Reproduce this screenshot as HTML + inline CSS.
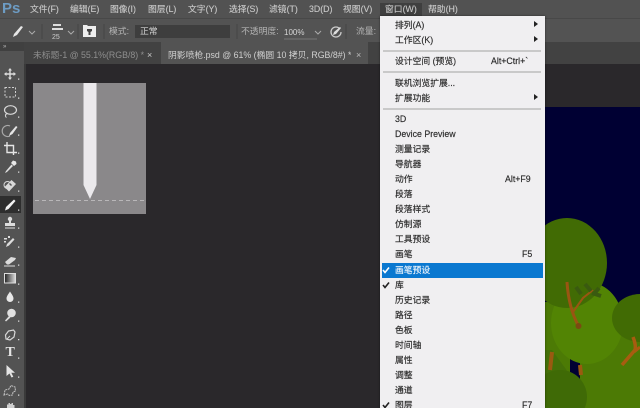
<!DOCTYPE html>
<html><head><meta charset="utf-8"><style>
html,body{margin:0;padding:0}
body{width:640px;height:408px;overflow:hidden;position:relative;background:#2a282b;font-family:"Liberation Sans","Noto Sans CJK SC",sans-serif}
#w{position:absolute;left:0;top:0;width:640px;height:408px;overflow:hidden;filter:blur(.35px)}
.a{position:absolute;white-space:nowrap}
.m{top:3px;font-size:8.8px;line-height:13px;color:#c8c8c8;-webkit-text-stroke:.12px #c8c8c8}
.i{position:absolute;left:395px;font-size:8.8px;line-height:15px;height:15px;color:#2a2a2a;white-space:nowrap;-webkit-text-stroke:.15px currentColor}
.k{position:absolute;font-size:8.8px;line-height:15px;color:#2a2a2a;white-space:nowrap;-webkit-text-stroke:.15px currentColor}
.s{position:absolute;left:383px;width:158px;height:1.500px;background:#c9c9c9}
.r{position:absolute;left:534px;width:0;height:0;border-left:4px solid #222;border-top:3px solid transparent;border-bottom:3px solid transparent}
.o{font-size:8.8px;line-height:13px}
</style></head><body><div id="w">
<div class="a" style="left:0;top:0;width:640px;height:18px;background:#525252"></div>
<div class="a" style="left:0;top:18px;width:640px;height:24px;background:#535353;border-top:1px solid #484848;box-sizing:border-box"></div>
<div class="a" style="left:0;top:42px;width:640px;height:22px;background:#424242"></div>
<div class="a" style="left:161px;top:42px;width:207px;height:22px;background:#535353"></div>
<div class="a" style="left:24px;top:64px;width:2px;height:344px;background:#3a3a3a"></div>
<div class="a" style="left:0;top:42px;width:24px;height:366px;background:#535353"></div>
<div class="a" style="left:0;top:42px;width:24px;height:9px;background:#404040"></div>
<div class="a" style="left:3px;top:44px;font-size:6px;line-height:6px;color:#bbb">»</div>

<div class="a" style="left:2px;top:0;font-size:15px;font-weight:bold;line-height:17px;color:#6d9cc4">Ps</div>
<div class="a m" style="left:30px">文件(F)</div>
<div class="a m" style="left:70px">编辑(E)</div>
<div class="a m" style="left:110px">图像(I)</div>
<div class="a m" style="left:148px">图层(L)</div>
<div class="a m" style="left:188px">文字(Y)</div>
<div class="a m" style="left:229px">选择(S)</div>
<div class="a m" style="left:269px">滤镜(T)</div>
<div class="a m" style="left:309px">3D(D)</div>
<div class="a m" style="left:343px">视图(V)</div>
<div class="a" style="left:380px;top:3px;width:42px;height:13px;background:#3f3f3f"></div>
<div class="a m" style="left:385px">窗口(W)</div>
<div class="a m" style="left:428px">帮助(H)</div>

<svg class="a" style="left:0;top:0" width="380" height="42" viewBox="0 0 380 42">
<path d="M13 37l1-3 7-8 2 1-6 8z" fill="#e6e6e6"/>
<path d="M29 31l3 3 3-3M68 31l3 3 3-3M223 31l3 3 3-3M315 31l3 3 3-3" stroke="#aaa" fill="none"/>
<path d="M42 24v15M78 24v15M104 24v15M237 24v15M346 24v15" stroke="#464646"/>
<path d="M53 24h8v2h-8zM52 28h11v2H52z" fill="#ddd"/>
<path d="M83 25h4l1 1h8v11H83z" fill="#eee"/>
<path d="M87 29h5v2l-1.500 1v3h-2v-3l-1.500-1z" fill="#444"/>
<rect x="135" y="25" width="95" height="13" fill="#3e3e3e"/>
<path d="M284 39h33" stroke="#777"/>
<path d="M339 28a5 5 0 1 0 2 4" fill="none" stroke="#ccc" stroke-width="1.300"/>
<path d="M333 35l1-3 6-5 1 1-5 6z" fill="#ddd"/>
</svg>
<div class="a" style="left:52px;top:34px;font-size:7px;line-height:8px;color:#ccc">25</div>
<div class="a o" style="left:109px;top:25px;color:#b5b5b5">模式:</div>
<div class="a o" style="left:140px;top:25px;color:#d5d5d5">正常</div>
<div class="a o" style="left:241px;top:25px;color:#b5b5b5">不透明度:</div>
<div class="a" style="left:284px;top:26px;font-size:8px;line-height:13px;color:#d5d5d5">100%</div>
<div class="a o" style="left:356px;top:25px;color:#b5b5b5">流量:</div>

<div class="a o" style="left:33px;top:49px;color:#8f8f8f">未标题-1 @ 55.1%(RGB/8) *</div>
<div class="a" style="left:147px;top:49px;font-size:9px;line-height:13px;color:#c8c8c8">×</div>
<div class="a o" style="left:168px;top:49px;width:183px;overflow:hidden;color:#d0d0d0">阴影喷枪.psd @ 61% (椭圆 10 拷贝, RGB/8#) *</div>
<div class="a" style="left:356px;top:49px;font-size:9px;line-height:13px;color:#bbb">×</div>

<div class="a" style="left:0;top:196px;width:21px;height:17px;background:#2e2e2e"></div>
<svg class="a" style="left:0;top:0" width="24" height="408" viewBox="0 0 24 408">
<g fill="#dcdcdc">
<path d="M9.300 70h1.400v8H9.300zM6 73.300h8v1.400H6z"/><path d="M10 68l2 2.500H8zM10 80l2-2.500H8zM4 74l2.500-2v4zM16 74l-2.500-2v4z"/>
<rect x="5" y="87.500" width="10.500" height="9.500" fill="none" stroke="#d0d0d0" stroke-dasharray="2 1.500"/>
<ellipse cx="10.500" cy="110" rx="6" ry="4.300" fill="none" stroke="#d8d8d8" stroke-width="1.200"/><path d="M7 113.500c-2 1-2 3-.5 4" stroke="#d8d8d8" fill="none"/>
<path d="M10 126a5.500 5.500 0 1 0 0 10" stroke="#a8a8a8" fill="none" stroke-width="1.200"/><path d="M9 136l1-3 6-7 1.500 1-5 7z" fill="#e4e4e4"/>
<path d="M7 142v10.500h10M4 145.500h9.500V155" stroke="#e4e4e4" stroke-width="1.400" fill="none"/>
<path d="M6 171l-1 2 2-1 6-6-1.500-1.500z" fill="#e0e0e0"/><path d="M11 163l2-2.500 3 1 .5 2.500-2.500 2z" fill="#e8e8e8"/>
<path d="M4.500 187l7-7 4.500 4-7 7.500z" fill="#d8d8d8"/><circle cx="7.500" cy="185" r="3.500" fill="none" stroke="#d8d8d8"/><path d="M9 184l2 2 1-1-2-2z" fill="#555"/>
<path d="M5 210.500l1-3.500 8-7.500 1.500 1.500-7 8z" fill="#f2f2f2"/>
<circle cx="10" cy="219" r="2.200"/><path d="M9 220h2v3h4v3H5v-3h4zM5 227.500h10v1H5z"/>
<path d="M6 247l1-3 6-6 1.500 1.500-5.500 6zM4 238h3v1.500H4zM8 236h2v2H8zM4 241h2v1.500H4z"/>
<path d="M5 262l6-5 5 1-1 2-6 4.500H7z"/><path d="M4 265.500h11v1H4z"/>
<defs><linearGradient id="g"><stop offset="0" stop-color="#222"/><stop offset="1" stop-color="#ddd"/></linearGradient></defs>
<rect x="4.500" y="273.500" width="11" height="9.500" fill="url(#g)" stroke="#ddd"/>
<path d="M10 291.500c-2 3-3.500 5-3.500 7a3.500 3.500 0 0 0 7 0c0-2-1.500-4-3.500-7z" fill="#e8e8e8"/>
<circle cx="11.500" cy="313" r="4.300" fill="#e0e0e0"/><path d="M9 316l-4 4.500 1 1 4.500-4z"/>
<path d="M5.500 335l3-4 5-1 1.500 2-1 5-4 3-4-1z" fill="none" stroke="#d8d8d8" stroke-width="1.200"/><path d="M7 339l3-3" stroke="#d8d8d8"/>
<path d="M6.500 365v11l3-2.500 2 4 1.800-.8-2-4h3.700z" fill="#e4e4e4"/>
<path d="M4 395l1-5 4-1 2-3.500 4 1.500.5 4-2.500 1-.5 3-3 .5-2-1.500z" fill="none" stroke="#c4c4c4" stroke-dasharray="2 .7"/>
<path d="M7 408v-3.500h1.500V403H10v1h1.500v-1H13v2h1.500v3z" fill="#cfcfcf"/>
<path d="M18 78.500h1.300v1.300H18zM18 97.500h1.300v1.300H18zM18 116.500h1.300v1.300H18zM18 134.500h1.300v1.300H18zM18 152.500h1.300v1.300H18zM18 171.500h1.300v1.300H18zM18 190.500h1.300v1.300H18zM18 209.500h1.300v1.300H18zM18 227.500h1.300v1.300H18zM18 246.500h1.300v1.300H18zM18 264.500h1.300v1.300H18zM18 283.500h1.300v1.300H18zM18 301.500h1.300v1.300H18zM18 320.500h1.300v1.300H18zM18 339h1.300v1.300H18zM18 357.500h1.300v1.300H18zM18 376.500h1.300v1.300H18zM18 394.500h1.300v1.300H18z"/>
</g></svg>
<div class="a" style="left:5.500px;top:346px;font-size:14px;font-family:'Liberation Serif',serif;font-weight:bold;line-height:14px;color:#e4e4e4">T</div>

<div class="a" style="left:33px;top:83px;width:113px;height:131px;background:#8a888a"></div>
<svg class="a" style="left:33px;top:83px" width="113" height="131" viewBox="0 0 113 131">
<path d="M50.500 0h13v102l-6.500 14-6.500-14z" fill="#ebe9ec"/>
<path d="M2 117.500h109" stroke="#b9b7b9" stroke-dasharray="4 3"/>
</svg>

<svg class="a" style="left:540px;top:107px" width="100" height="301" viewBox="0 0 100 301">
<rect width="100" height="301" fill="#000033"/>
<rect x="0" y="195" width="30" height="106" fill="#4c7a05"/>
<rect x="40" y="226" width="60" height="75" fill="#4c7a05"/>
<ellipse cx="47" cy="216" rx="36" ry="41" fill="#528404"/>
<path d="M0 243h12l16 22 0 36H0z" fill="#447008"/>
<ellipse cx="20" cy="290" rx="27" ry="27" fill="#3f6a06"/>
<path d="M40 258l1 10" stroke="#9a5a10" stroke-width="4"/>
<path d="M12 245l-2 18" stroke="#9a5a10" stroke-width="4"/>
<ellipse cx="27" cy="156" rx="40" ry="45" fill="#416b04"/>
<ellipse cx="100" cy="211" rx="28" ry="24" fill="#416b04"/>
<path d="M27 175c1 16 5 32 11.500 44" stroke="#9a5512" stroke-width="3" fill="none"/>
<path d="M33 205l10-14 10-8" stroke="#9a5512" stroke-width="2" fill="none"/>
<circle cx="38.500" cy="219" r="3" fill="#7a4a12"/>
<path d="M36 180l5 7M45 177l6 7M59 181l-5 6M52 186l9 3" stroke="#3a5a10" stroke-width="4"/>
<path d="M93 230c2 5 3 9 2 13l-13 15" stroke="#a85c10" stroke-width="3.500" fill="none"/>
<path d="M94 245l6-5" stroke="#a85c10" stroke-width="3"/>
</svg>

<div class="a" style="left:380px;top:16px;width:165px;height:392px;background:#f0eff1;box-shadow:0 0 2px rgba(0,0,0,.5)"></div>
<div class="a" style="left:382px;top:263px;width:161px;height:15px;background:#0a78d0"></div>
<div class="i" style="top:18px">排列(A)</div><div class="r" style="top:21px"></div>
<div class="i" style="top:33px">工作区(K)</div><div class="r" style="top:36px"></div>
<div class="s" style="top:50px"></div>
<div class="i" style="top:54px">设计空间 (预览)</div><div class="k" style="left:491px;top:54px">Alt+Ctrl+`</div>
<div class="s" style="top:71px"></div>
<div class="i" style="top:76px">联机浏览扩展...</div>
<div class="i" style="top:91px">扩展功能</div><div class="r" style="top:94px"></div>
<div class="s" style="top:108px"></div>
<div class="i" style="top:112px">3D</div>
<div class="i" style="top:127px">Device Preview</div>
<div class="i" style="top:142px">测量记录</div>
<div class="i" style="top:157px">导航器</div>
<div class="i" style="top:172px">动作</div><div class="k" style="left:505px;top:172px">Alt+F9</div>
<div class="i" style="top:187px">段落</div>
<div class="i" style="top:202px">段落样式</div>
<div class="i" style="top:217px">仿制源</div>
<div class="i" style="top:232px">工具预设</div>
<div class="i" style="top:247px">画笔</div><div class="k" style="left:522px;top:247px">F5</div>
<div class="i" style="top:263px;color:#e8f2fb">画笔预设</div>
<div class="i" style="top:278px">库</div>
<div class="i" style="top:293px">历史记录</div>
<div class="i" style="top:308px">路径</div>
<div class="i" style="top:323px">色板</div>
<div class="i" style="top:338px">时间轴</div>
<div class="i" style="top:353px">属性</div>
<div class="i" style="top:368px">调整</div>
<div class="i" style="top:383px">通道</div>
<div class="i" style="top:398px">图层</div><div class="k" style="left:522px;top:398px">F7</div>
<svg class="a" style="left:380px;top:260px" width="14" height="148" viewBox="0 0 14 148">
<path d="M3 10l2 2.500 4-5" stroke="#fff" stroke-width="1.600" fill="none"/>
<path d="M3 25l2 2.500 4-5" stroke="#222" stroke-width="1.600" fill="none"/>
<path d="M3 145l2 2.500 4-5" stroke="#222" stroke-width="1.600" fill="none"/>
</svg>
</div></body></html>
